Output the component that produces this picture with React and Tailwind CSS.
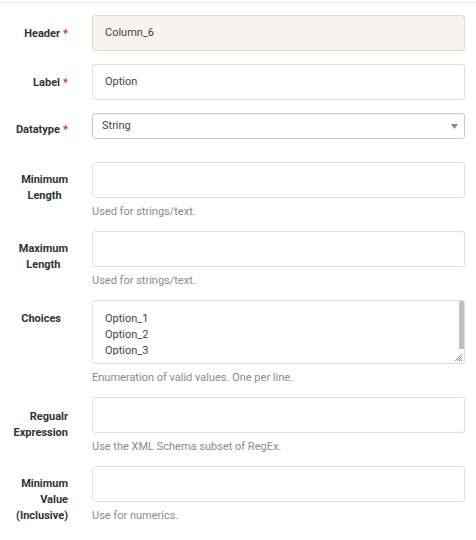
import React from "react";

const font = { fontFamily: "Roboto, 'Liberation Sans', sans-serif" };

function Req() {
  return <span className="text-[#e8141b] ml-[3px]">*</span>;
}

function Label({ children, className = "" }) {
  return (
    <div className={"text-right text-[11px] leading-4 font-bold text-[#333] " + className}>
      {children}
    </div>
  );
}

function TextInput({ value, readOnly }) {
  return (
    <div
      className={
        "h-[36px] rounded-[3px] border flex items-center pl-[12px] text-[11px] text-[#444] " +
        (readOnly ? "bg-[#f7f4ef] border-[#e0d9cd]" : "bg-white border-[#e4ddd1]")
      }
    >
      {value}
    </div>
  );
}

function Help({ children }) {
  return <div className="mt-[5px] mb-[11px] text-[11px] leading-[17px] text-[#8a8a8a]">{children}</div>;
}

function Row({ label, labelClass, children, className = "" }) {
  return (
    <div className={"grid grid-cols-[68px_1fr] gap-x-6 " + className}>
      <Label className={labelClass}>{label}</Label>
      <div>{children}</div>
    </div>
  );
}

function Centered({ lines }) {
  return (
    <div className="inline-block text-center">
      {lines.map((l) => (
        <div key={l}>{l}</div>
      ))}
    </div>
  );
}

export default function App() {
  return (
    <div className="w-[476px] h-[540px] bg-white overflow-hidden" style={font}>
      <div className="h-[2px]" />
      <div className="border-t border-[#f1ede6]" />
      <div className="pr-[11px] pt-[12px]">
        <Row label={<>Header<Req /></>} labelClass="pt-[11px]" className="mb-[13px]">
          <TextInput value="Column_6" readOnly />
        </Row>
        <Row label={<>Label<Req /></>} labelClass="pt-[11px]" className="mb-[13px]">
          <TextInput value="Option" />
        </Row>
        <Row label={<>Datatype<Req /></>} labelClass="pt-[9px]" className="mb-[23px]">
          <div className="relative h-[26px] rounded-[3px] border border-[#cbcbcb] shadow-[inset_0_1px_1px_rgba(0,0,0,0.05)] flex items-center pl-[9px] text-[11px] text-[#444]">
            String
            <svg className="absolute right-[6px] top-[10px]" width="7" height="5" viewBox="0 0 7 5">
              <path d="M0 0h7L3.5 5z" fill="#888" />
            </svg>
          </div>
        </Row>
        <Row label={<Centered lines={["Minimum", "Length"]} />} labelClass="pt-[10px]">
          <TextInput value="" />
          <Help>Used for strings/text.</Help>
        </Row>
        <Row label={<Centered lines={["Maximum", "Length"]} />} labelClass="pt-[10px]">
          <TextInput value="" />
          <Help>Used for strings/text.</Help>
        </Row>
        <Row label="Choices" labelClass="pt-[11px] pr-[7px]">
          <div className="relative h-[64px] rounded-[3px] border border-[#e0d9cf] bg-white">
            <div className="h-[54px] overflow-hidden pt-[10px] pl-[12px] text-[11px] leading-4 text-[#444]">
              <div>Option_1</div>
              <div>Option_2</div>
              <div>Option_3</div>
            </div>
            <div className="absolute right-0 top-0 w-[5px] h-[48px] bg-[#c1c1c1]" />
            <svg className="absolute right-[1px] bottom-[1px]" width="10" height="10" viewBox="0 0 10 10">
              <path d="M9 2L2 9M9 4L4 9M9 6L6 9M9 8L8 9" stroke="#777" strokeWidth="0.8" />
            </svg>
          </div>
          <Help>Enumeration of valid values. One per line.</Help>
        </Row>
        <Row label={<><div>Regualr</div><div>Expression</div></>} labelClass="pt-[12px]">
          <TextInput value="" />
          <Help>Use the XML Schema subset of RegEx.</Help>
        </Row>
        <Row label={<><div>Minimum</div><div>Value</div><div>(Inclusive)</div></>} labelClass="pt-[10px]">
          <TextInput value="" />
          <Help>Use for numerics.</Help>
        </Row>
      </div>
    </div>
  );
}
